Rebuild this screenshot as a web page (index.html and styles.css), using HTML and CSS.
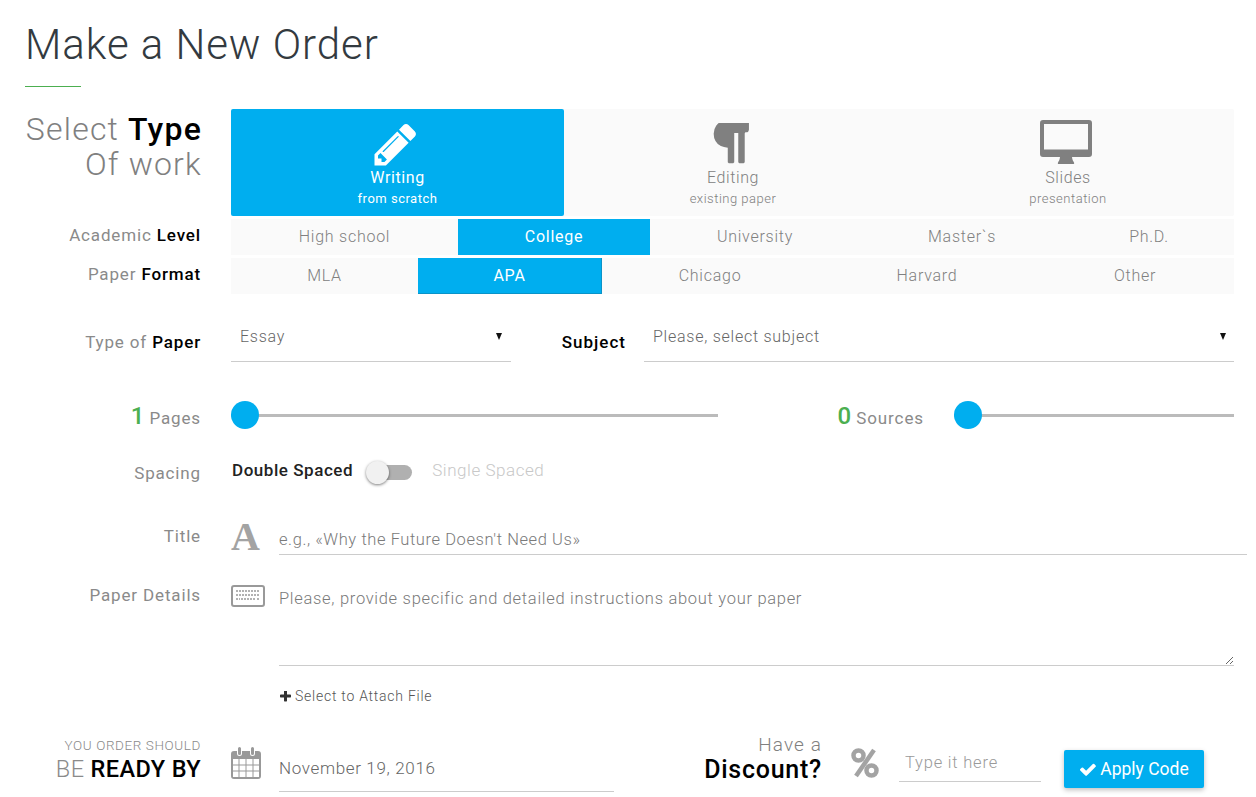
FILE: index.html
```html
<!DOCTYPE html>
<html lang="en">
<head>
<meta charset="utf-8">
<title>Make a New Order</title>
<link rel="stylesheet" href="styles.css">
</head>
<body>
<main class="page">
  <h1 class="heading">Make a New Order</h1>
  <div class="rule"></div>

  <div class="row row-type">
    <div class="label label-big">Select <b>Type</b><br>Of work</div>
    <div class="seg seg-type">
      <div class="type-item on">
        <svg class="ico-pencil" viewBox="0 0 1792 1792"><path fill="currentColor" d="M491 1536l91-91-235-235-91 91v107h128v128h107zm523-928q0-22-22-22-10 0-17 7l-542 542q-7 7-7 17 0 22 22 22 10 0 17-7l542-542q7-7 7-17zm-54-192l416 416-832 832h-416v-416zm683 96q0 53-37 90l-166 166-416-416 166-165q36-38 90-38 53 0 91 38l235 234q37 39 37 91z"/></svg>
        <span class="type-name">Writing</span><span class="type-sub">from scratch</span>
      </div>
      <div class="type-item">
        <svg class="ico-para" viewBox="256 180 1280 1340"><path fill="currentColor" d="M1534 245v73q0 29-18.500 61t-42.500 32q-50 0-54 1-26 6-32 31-3 11-3 64v952q0 25-18 43t-43 18h-108q-25 0-43-18t-18-43v-1018h-143v1018q0 25-17.500 43t-43.500 18h-108q-26 0-43.500-18t-17.500-43v-496q-147-12-245-59-126-58-192-179-64-117-64-259 0-166 88-286 88-118 209-159 111-37 417-37h479q25 0 43 18t18 43z"/></svg>
        <span class="type-name">Editing</span><span class="type-sub">existing paper</span>
      </div>
      <div class="type-item">
        <svg class="ico-desk" viewBox="0 0 52 44"><path fill="currentColor" fill-rule="evenodd" d="M3 0h46a3 3 0 0 1 3 3v31a3 3 0 0 1-3 3H32c.3 2.500 1 4 2 5.500.5 1 0 1.500-1 1.500H19c-1 0-1.500-.5-1-1.500 1-1.500 1.700-3 2-5.500H3a3 3 0 0 1-3-3V3a3 3 0 0 1 3-3zm1 4v25.500h44V4z"/></svg>
        <span class="type-name">Slides</span><span class="type-sub">presentation</span>
      </div>
    </div>
  </div>

  <div class="row row-level">
    <div class="label">Academic <b>Level</b></div>
    <div class="seg seg-level">
      <div class="seg-item">High school</div>
      <div class="seg-item on">College</div>
      <div class="seg-item">University</div>
      <div class="seg-item">Master`s</div>
      <div class="seg-item">Ph.D.</div>
    </div>
  </div>

  <div class="row row-format">
    <div class="label">Paper <b>Format</b></div>
    <div class="seg seg-format">
      <div class="seg-item">MLA</div>
      <div class="seg-item on edged">APA</div>
      <div class="seg-item">Chicago</div>
      <div class="seg-item">Harvard</div>
      <div class="seg-item">Other</div>
    </div>
  </div>

  <div class="row row-select">
    <div class="label label-low">Type of <b>Paper</b></div>
    <div class="select select-paper"><span>Essay</span><i class="arrow"></i></div>
    <div class="subject-label"><b>Subject</b></div>
    <div class="select select-subject"><span>Please, select subject</span><i class="arrow"></i></div>
  </div>

  <div class="row row-slider">
    <div class="label label-low"><span class="num">1</span> Pages</div>
    <div class="slider slider-pages"><i class="thumb"></i></div>
    <div class="sources-label"><span class="num">0</span> Sources</div>
    <div class="slider slider-sources"><i class="thumb"></i></div>
  </div>

  <div class="row row-spacing">
    <div class="label label-spacing">Spacing</div>
    <div class="toggle-wrap">
      <b class="toggle-on">Double Spaced</b>
      <span class="toggle"><i class="toggle-thumb"></i></span>
      <span class="toggle-off">Single Spaced</span>
    </div>
  </div>

  <div class="row row-title">
    <div class="label">Title</div>
    <span class="ico-a">A</span>
    <input class="field field-title" type="text" placeholder="e.g., «Why the Future Doesn't Need Us»">
  </div>

  <div class="row row-details">
    <div class="label">Paper Details</div>
    <svg class="ico-kb" viewBox="0 0 34 22"><rect x="1" y="1" width="32" height="20" rx="2" fill="none" stroke="currentColor" stroke-width="2"/><path fill="none" stroke="currentColor" stroke-width="1.500" stroke-dasharray="2 1" d="M5 6h24M5 10h24M5 14h4M10 14h14M26 14h3"/></svg>
    <textarea class="field field-details" placeholder="Please, provide specific and detailed instructions about your paper"></textarea>
  </div>

  <div class="row row-attach">
    <svg class="ico-plus" viewBox="192 192 1408 1408"><path fill="currentColor" d="M1600 736v192q0 40-28 68t-68 28h-416v416q0 40-28 68t-68 28h-192q-40 0-68-28t-28-68v-416h-416q-40 0-68-28t-28-68v-192q0-40 28-68t68-28h416v-416q0-40 28-68t68-28h192q40 0 68 28t28 68v416h416q40 0 68 28t28 68z"/></svg>
    <span class="attach-text">Select to Attach File</span>
  </div>

  <div class="row row-bottom">
    <div class="label label-ready"><small>YOU ORDER SHOULD</small><span>BE <b>READY BY</b></span></div>
    <svg class="ico-cal" viewBox="0 0 30 32"><path fill="currentColor" fill-rule="evenodd" d="M3 4h3v2.500a2.500 2.500 0 0 0 5 0V4h8v2.500a2.500 2.500 0 0 0 5 0V4h3a3 3 0 0 1 3 3v22a3 3 0 0 1-3 3H3a3 3 0 0 1-3-3V7a3 3 0 0 1 3-3zM2 12v18h26V12z"/><path fill="currentColor" d="M7 1.500a1.500 1.500 0 0 1 3 0v5a1.500 1.500 0 0 1-3 0zM20 1.500a1.500 1.500 0 0 1 3 0v5a1.500 1.500 0 0 1-3 0z"/><path fill="none" stroke="currentColor" d="M8 12v18M15 12v18M22 12v18M2 18h26M2 24h26"/></svg>
    <input class="field field-date" type="text" value="November 19, 2016">
    <div class="discount-label"><span>Have a</span><b>Discount?</b></div>
    <svg class="ico-pct" viewBox="0 0 28 30"><g fill="none" stroke="currentColor" stroke-width="4.500"><circle cx="7.500" cy="7.500" r="5"/><circle cx="20.500" cy="22.500" r="5"/></g><path fill="none" stroke="currentColor" stroke-width="4.500" d="M23 2L5 28"/></svg>
    <input class="field field-code" type="text" placeholder="Type it here">
    <button class="apply" type="button"><svg class="ico-check" viewBox="120 300 1560 1200"><path fill="currentColor" d="M1671 566q0 40-28 68l-724 724-136 136q-28 28-68 28t-68-28l-136-136-362-362q-28-28-28-68t28-68l136-136q28-28 68-28t68 28l294 295 656-657q28-28 68-28t68 28l136 136q28 28 28 68z"/></svg>Apply Code</button>
  </div>
</main>
</body>
</html>
```
FILE: styles.css
```css
* { box-sizing: border-box; }
html, body { margin: 0; padding: 0; height: 797px; overflow: hidden; background: #fff; }
body { font-family: Roboto, "Liberation Sans", sans-serif; font-size: 16px; color: #808080; letter-spacing: .6px; }
b { font-weight: 500; color: #000; }
.page { padding: 0 22px 0 25px; width: 1256px; }
.heading { margin: 0; height: 86px; padding-top: 19px; font-size: 42px; line-height: 52px; font-weight: 300; color: #333a40; letter-spacing: .95px; }
.rule { width: 56px; height: 1px; background: #4caf50; }

.row { display: flex; }
.label { width: 176px; margin-right: 30px; flex: none; text-align: right; line-height: 20px; font-size: 17px; letter-spacing: .85px; font-weight: 400; color: #8a8a8a; }
.row-type { margin-top: 22px; height: 107px; }
.label-big { width: 177px; margin-right: 29px; font-size: 32px; line-height: 35px; font-weight: 300; letter-spacing: 1.2px; padding-top: 3px; color: #808080; }
.seg { display: grid; width: 1003px; background: #fafafa; }
.seg-type { grid-template-columns: 333px 338px 332px; border-radius: 2px; }
.type-item { display: flex; flex-direction: column; align-items: center; height: 107px; color: #808080; font-size: 16px; }
.type-item.on { background: #00aeef; color: #fff; border-radius: 2px; }
.type-name { line-height: 20px; margin-top: 2px; font-weight: 300; }
.type-item.on .type-name, .type-item.on .type-sub { font-weight: 400; }
.type-sub { font-size: 13px; line-height: 16px; margin-top: 3px; font-weight: 300; letter-spacing: .5px; }
.ico-pencil { width: 49px; height: 49px; margin: 11px 0 -3px -5px; }
.ico-para { width: 36px; height: 43px; margin: 14px 0 0 -5px; }
.ico-desk { width: 52px; height: 44px; margin: 11px 0 2px -4px; }

.row-level { margin-top: 3px; height: 36px; }
.row-format { margin-top: 3px; height: 36px; }
.row-level .label { padding-top: 6px; }
.row-format .label { padding-top: 6px; }
.seg-level { grid-template-columns: 227px 192px 210px 204px 170px; }
.seg-format { grid-template-columns: 187px 184px 216px 218px 198px; }
.seg-item { display: flex; align-items: center; justify-content: center; font-weight: 300; font-size: 16px; letter-spacing: .75px; padding-bottom: 2px; }
.seg-item.on { background: #00aeef; color: #fff; font-weight: 400; }
.seg-item.edged { border-right: 1px solid #0a93c8; border-bottom: 1px solid #0a93c8; padding-bottom: 0; }

.row-select { margin-top: 22px; height: 46px; }
.label-low { padding-top: 16px; }
.select { position: relative; height: 46px; border-bottom: 1px solid #ccc; font-weight: 300; padding: 11px 0 0 9px; color: #666; line-height: 20px; letter-spacing: .75px; }
.select-paper { width: 280px; }
.select-subject { width: 590px; }
.arrow { position: absolute; right: 9px; top: 17px; border: 3.500px solid transparent; border-top: 7px solid #111; border-bottom: 0; }
.select-subject .arrow { right: 8px; }
.subject-label { width: 133px; padding: 16px 18px 0 0; text-align: right; line-height: 20px; flex: none; font-size: 17px; letter-spacing: 1px; }

.row-slider { margin-top: 39px; height: 28px; }
.row-slider .label { padding-top: 5px; }
.num { color: #4caf50; font-size: 24px; font-weight: 500; line-height: 20px; letter-spacing: 0; }
.slider { position: relative; height: 28px; background: linear-gradient(#bbb, #bbb) 0 13px / 100% 3px no-repeat; }
.thumb { position: absolute; left: 0; top: 0; width: 28px; height: 28px; border-radius: 50%; background: #00aeef; }
.slider-pages { width: 487px; }
.sources-label { width: 206px; line-height: 20px; padding-top: 5px; text-align: right; flex: none; font-size: 17px; letter-spacing: .9px; color: #8a8a8a; }
.slider-sources { width: 280px; margin-left: 30px; }

.row-spacing { margin-top: 31px; height: 24px; }
.label-spacing { padding-top: 3px; }
.toggle-wrap { display: flex; align-items: flex-start; font-size: 17px; letter-spacing: .55px; }
.toggle-on { line-height: 20px; margin-left: 1px; color: #222; }
.toggle { position: relative; width: 45px; height: 15px; margin: 5px 0 0 14px; background: #b0b0b0; border-radius: 8px; }
.toggle-thumb { position: absolute; left: -1px; top: -4px; width: 23px; height: 23px; border-radius: 50%; background: #f1f1f1; box-shadow: 0 1px 3px rgba(0,0,0,.5); }
.toggle-off { line-height: 20px; margin-left: 20px; color: #c8c8c8; font-weight: 300; }

.row-title { margin-top: 35px; height: 36px; }
.row-title .label { padding-top: 7px; }
.ico-a { width: 48px; flex: none; font-family: "Liberation Serif", serif; font-weight: 700; font-size: 40px; line-height: 36px; color: #a3a3a3; letter-spacing: 0; }
.field { border: 0; border-bottom: 1px solid #ccc; background: transparent; outline: 0; padding: 0; margin: 0; font: 300 16.500px/20px Roboto, "Liberation Sans", sans-serif; letter-spacing: .7px; color: #666; }
.field::placeholder { color: #7a7a7a; opacity: 1; }
.field-title { width: 968px; height: 36px; padding-top: 6px; flex: none; letter-spacing: .58px; }

.row-details { margin-top: 25px; height: 86px; }
.row-details .label { padding-top: 5px; }
.ico-kb { width: 34px; height: 22px; margin-top: 5px; margin-right: 14px; color: #999; flex: none; }
.field-details { width: 955px; height: 86px; padding-top: 9px; resize: vertical; display: block; flex: none; }

.row-attach { margin-top: 20px; margin-left: 255px; height: 20px; align-items: center; }
.ico-plus { width: 11px; height: 11px; color: #333; margin-right: 4px; }
.attach-text { font-size: 14px; font-weight: 300; color: #555; letter-spacing: .75px; }

.row-bottom { margin-top: 30px; height: 58px; }
.label-ready { display: flex; flex-direction: column; padding-top: 0; }
.label-ready small { font-size: 13.500px; line-height: 18px; font-weight: 300; letter-spacing: .6px; }
.label-ready span { font-size: 23.500px; line-height: 30px; font-weight: 300; letter-spacing: .4px; }
.ico-cal { width: 30px; height: 32px; margin-top: 11px; margin-right: 18px; color: #999; flex: none; }
.field-date { width: 335px; height: 56px; padding-top: 9px; flex: none; font-size: 17px; letter-spacing: .65px; }
.discount-label { width: 208px; flex: none; text-align: right; display: flex; flex-direction: column; margin-top: -2px; }
.discount-label span { font-size: 19px; line-height: 22px; font-weight: 300; letter-spacing: 1.1px; }
.discount-label b { font-size: 25px; line-height: 28px; letter-spacing: .75px; }
.ico-pct { width: 28px; height: 30px; margin: 12px 20px 0 29px; color: #a3a3a3; flex: none; }
.field-code { width: 142px; height: 46px; padding: 8px 0 0 6px; flex: none; font-size: 16.500px; letter-spacing: .8px; }
.field-code::placeholder { color: #9a9a9a; }
.apply { display: flex; align-items: center; justify-content: center; width: 140px; height: 38px; margin: 14px 0 0 23px; border: 0; border-radius: 2px; background: #00aeef; color: #fff; font: 400 17.500px Roboto, "Liberation Sans", sans-serif; box-shadow: 0 2px 5px rgba(0,0,0,.25); padding: 0 0 0 1px; }
.ico-check { width: 16px; height: 13px; margin-right: 4px; }
```
